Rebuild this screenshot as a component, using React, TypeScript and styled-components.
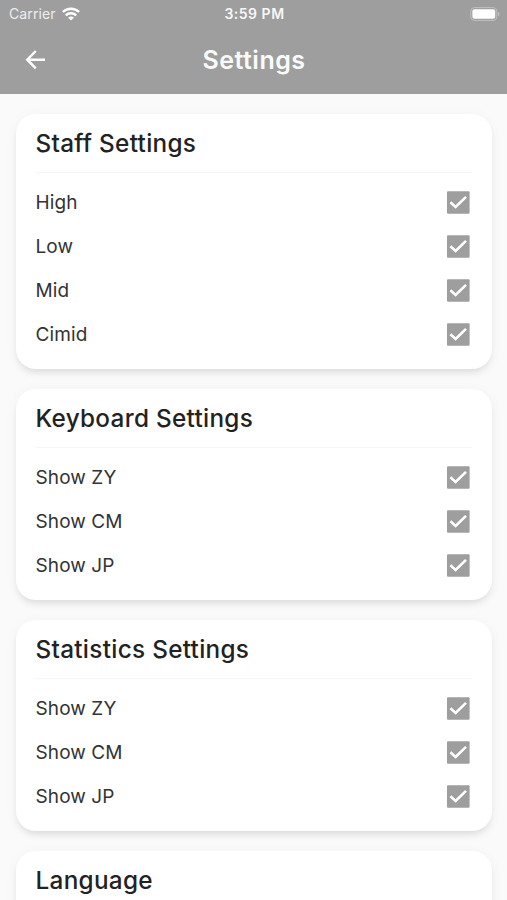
import React from "react";
import styled, { createGlobalStyle } from "styled-components";

const Global = createGlobalStyle`
  * { box-sizing: border-box; }
  html, body { margin: 0; overflow: hidden; }
  body { background: #fafafa; font-family: Inter, sans-serif; color: #222; }
`;
const Screen = styled.main`
  width: 507px; height: 900px; overflow: hidden; background: #fafafa;
`;
const Header = styled.header`
  height: 93.6px; background: #9e9e9e; color: #fff;
`;
const StatusBar = styled.div`
  height: 27px; padding: 0 7px 0 9px;
  display: grid; grid-template-columns: 1fr auto 1fr; align-items: center;
`;
const Carrier = styled.div`
  display: flex; align-items: center; gap: 6px; font-size: 14px; letter-spacing: 0.1px; color: #ededed;
`;
const Time = styled.div`
  font-size: 14px; font-weight: 600; letter-spacing: 0.5px; color: #f7f7f7;
`;
const Battery = styled.svg`
  justify-self: end;
`;
const TitleBar = styled.div`
  height: 65px; padding: 0 22px 0 23px;
  display: grid; grid-template-columns: 24px 1fr 24px; align-items: center;
`;
const Title = styled.h1`
  margin: 0; text-align: center; font-size: 25px; line-height: 30px; font-weight: 600; letter-spacing: 0.5px; color: #fafafa;
`;
const BackButton = styled.button`
  padding: 0; border: 0; background: none; color: inherit; display: flex;
`;
const Content = styled.div`
  padding: 20px 15px 20px 15.5px; display: flex; flex-direction: column; gap: 20px;
`;
const Card = styled.section`
  padding: 0 20px 12px; background: #fff; border-radius: 20px;
  box-shadow: 0 5px 7px -2px rgba(0, 0, 0, 0.1), 0 2px 14px rgba(0, 0, 0, 0.04);
`;
const CardTitle = styled.h2`
  margin: 0 0 7.5px; height: 59px; line-height: 58px; border-bottom: 1px solid #f6f6f6;
  font-size: 24.3px; font-weight: 500; letter-spacing: 0.3px;
`;
const Rows = styled.div`
  padding-bottom: 0.5px;
`;
const Row = styled.div`
  height: 44px; padding-right: 2.5px; display: flex; align-items: center; justify-content: space-between;
`;
const Label = styled.span`
  font-size: 19px; letter-spacing: 0.1px; color: #333;
`;
const Check = styled.svg`
  display: block;
`;

const groups = [
  { title: "Staff Settings", rows: ["High", "Low", "Mid", "Cimid"] },
  { title: "Keyboard Settings", rows: ["Show ZY", "Show CM", "Show JP"] },
  { title: "Statistics Settings", rows: ["Show ZY", "Show CM", "Show JP"] },
  { title: "Language", rows: [] },
];

export default function App() {
  return (
    <Screen>
      <Global />
      <Header>
        <StatusBar>
          <Carrier>
            Carrier
            <svg width="18" height="14" viewBox="0 0 18 14" fill="none" stroke="#fff" strokeWidth="2.4">
              <path d="M.9 5a11.6 11.6 0 0 1 16.2 0M3.8 8.4a7.4 7.4 0 0 1 10.4 0" />
              <path d="M9 13.6 6.1 10.7a4 4 0 0 1 5.8 0Z" fill="#fff" stroke="none" />
            </svg>
          </Carrier>
          <Time>3:59 PM</Time>
          <Battery width="30" height="14" viewBox="0 0 30 14" fill="none">
            <rect x="0.8" y="0.6" width="26" height="12.8" rx="3.6" stroke="#c0c0c0" />
            <rect x="2.4" y="2.2" width="22.8" height="9.6" rx="2" fill="#fff" />
            <path d="M28 4.8q1.6 .7 1.6 2.2T28 9.2Z" fill="#c0c0c0" />
          </Battery>
        </StatusBar>
        <TitleBar>
          <BackButton aria-label="Back">
            <svg width="24" height="24" viewBox="0 0 24 24" fill="none" stroke="#fff" strokeWidth="2.4">
              <path d="M22 11.7H4.6M12.8 3 4.2 11.7l8.6 8.7" />
            </svg>
          </BackButton>
          <Title>Settings</Title>
        </TitleBar>
      </Header>
      <Content>
        {groups.map((group) => (
          <Card key={group.title}>
            <CardTitle>{group.title}</CardTitle>
            <Rows>
              {group.rows.map((row) => (
                <Row key={row}>
                  <Label>{row}</Label>
                  <Check width="23" height="23" viewBox="0 0 23 23" role="checkbox" aria-checked="true" aria-label={row}>
                    <rect x="0" y="0.2" width="22.6" height="22.6" rx="1" fill="#9e9e9e" />
                    <path d="m3.4 11.3 5.2 4.6L19 5.9" fill="none" stroke="#fff" strokeWidth="2.6" />
                  </Check>
                </Row>
              ))}
            </Rows>
          </Card>
        ))}
      </Content>
    </Screen>
  );
}
